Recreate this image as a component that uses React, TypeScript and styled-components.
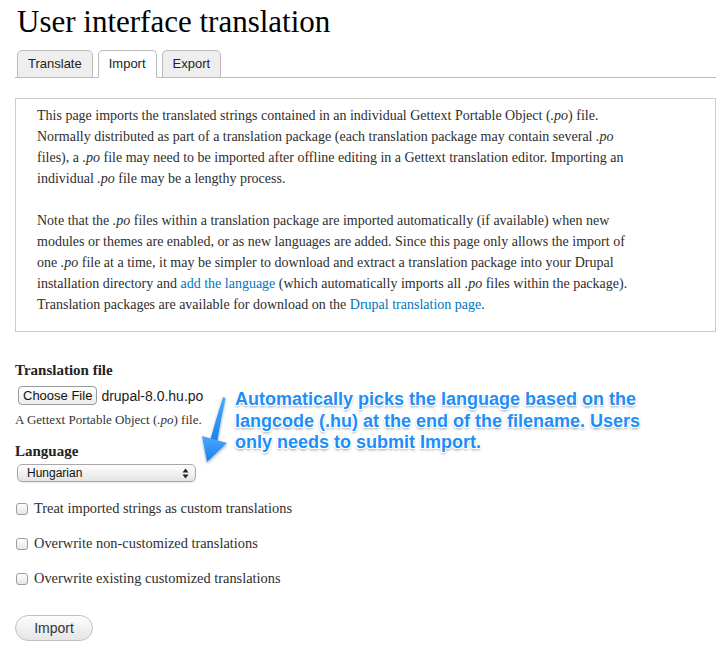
import styled, { createGlobalStyle } from 'styled-components';

const GlobalStyle = createGlobalStyle`
  body {
    margin: 0;
    background: #fff;
    color: #333;
    font-family: "Liberation Serif", serif;
  }
`;

const Page = styled.div`
  width: 701px;
  padding: 0 9px 24px 15px;
`;

const Title = styled.h1`
  margin: 0;
  padding: 3px 0 0 2px;
  font: 400 31px/38px "Liberation Serif", serif;
  color: #000;
`;

const TabList = styled.ul`
  display: flex;
  gap: 5px;
  margin: 9px 0 0;
  padding: 0 0 0 2px;
  list-style: none;
  border-bottom: 1px solid #bbb;
`;

const Tab = styled.li<{ $active?: boolean }>`
  box-sizing: border-box;
  height: 28px;
  margin-bottom: -1px;
  padding: 0 10px 2px;
  display: flex;
  align-items: center;
  border: 1px solid #bbb;
  border-bottom-color: ${(p) => (p.$active ? '#fff' : '#bbb')};
  border-radius: 5px 5px 0 0;
  background: ${(p) => (p.$active ? '#fff' : '#eee')};
  font: 13px "Liberation Sans", sans-serif;
  color: #222;
`;

const Intro = styled.div`
  margin-top: 20px;
  padding: 6px 21px 16px;
  border: 1px solid #ccc;
`;

const Para = styled.p`
  margin: 0 0 21px;
  font-size: 14px;
  line-height: 21px;
  color: #2e2e2e;
  white-space: nowrap;

  &:last-child {
    margin-bottom: 0;
  }

  a {
    color: #0074bd;
    text-decoration: none;
  }
`;

const Form = styled.form`
  position: relative;
  padding-top: 28px;
`;

const FieldLabel = styled.label`
  display: block;
  font: 700 15px/21px "Liberation Serif", serif;
  color: #222;
`;

const Field = styled.div<{ $gap?: number }>`
  margin-bottom: ${(p) => p.$gap ?? 0}px;
`;

const FileRow = styled.div`
  display: flex;
  align-items: center;
  gap: 4px;
  margin: 5px 0 0 3px;
`;

const FileButton = styled.button`
  height: 19px;
  padding: 0 4px;
  border: 1px solid #9a9a9a;
  border-radius: 4px;
  background: linear-gradient(#fff, #ececec);
  font: 13px "Liberation Sans", sans-serif;
  color: #111;
`;

const FileName = styled.span`
  font: 14px "Liberation Sans", sans-serif;
  color: #222;
`;

const Description = styled.div`
  margin-top: 6px;
  font-size: 13px;
  line-height: 18px;
  color: #333;
`;

const SelectBox = styled.div`
  box-sizing: border-box;
  width: 179px;
  height: 18px;
  margin: 2px 0 0 2px;
  padding: 0 6px 0 9px;
  display: flex;
  align-items: center;
  justify-content: space-between;
  border: 1px solid #a8a8a8;
  border-radius: 5px;
  background: linear-gradient(#fefefe, #e4e4e4);
  box-shadow: 0 1px 1px rgba(0, 0, 0, 0.08);
  font: 12px "Liberation Sans", sans-serif;
  color: #111;
`;

const Options = styled.div`
  display: flex;
  flex-direction: column;
  gap: 14px;
  margin-top: 16px;
`;

const CheckRow = styled.label`
  display: flex;
  align-items: center;
  gap: 6px;
  padding-left: 1px;
  font-size: 14.4px;
  line-height: 21px;
  color: #2e2e2e;
`;

const Check = styled.input`
  appearance: none;
  width: 12px;
  height: 12px;
  margin: 0;
  border: 1px solid #9c9c9c;
  border-radius: 3px;
  background: linear-gradient(#fff, #e6e6e6);
  box-shadow: inset 0 1px 0 #fff;
`;

const SubmitButton = styled.button`
  box-sizing: border-box;
  width: 78px;
  height: 26px;
  margin-top: 26px;
  border: 1px solid #c2c2c2;
  border-radius: 13px;
  background: linear-gradient(#fdfdfd, #e5e5e5);
  font: 14px "Liberation Sans", sans-serif;
  color: #333;
`;

/* callout drawn over the form: arrow plus note */
const Arrow = styled.svg`
  position: absolute;
  left: 175px;
  top: 53px;
  overflow: visible;
`;

const Note = styled.div`
  position: absolute;
  left: 220px;
  top: 57px;
  font: 700 18px/21.5px "Liberation Sans", Arial, sans-serif;
  color: #1e8ef8;
  white-space: nowrap;
  text-shadow:
    1px 0 0 #fff, -1px 0 0 #fff, 0 1px 0 #fff, 0 -1px 0 #fff,
    1px 1px 0 #fff, -1px -1px 0 #fff, 1px -1px 0 #fff, -1px 1px 0 #fff,
    0 2px 3px rgba(0, 0, 0, 0.45);
`;

const CalloutArrow = () => (
  <Arrow width="50" height="90" viewBox="0 0 50 90">
    <defs>
      <linearGradient id="arrowFill" x1="0" y1="0" x2="0" y2="1">
        <stop offset="0" stopColor="#4aa8ff" />
        <stop offset="1" stopColor="#1a7ff0" />
      </linearGradient>
      <filter id="arrowShadow" x="-50%" y="-50%" width="200%" height="200%">
        <feDropShadow dx="0" dy="1.5" stdDeviation="1.5" floodColor="#000" floodOpacity="0.35" />
      </filter>
    </defs>
    <g filter="url(#arrowShadow)" fill="url(#arrowFill)">
      <path d="M33 12 L35.5 13 Q31 34 27 58 L20 56 Q26 34 33 12 Z" />
      <path d="M12 51 L37 58 L17 77 Z" />
    </g>
  </Arrow>
);

const SelectArrows = () => (
  <svg width="7" height="11" viewBox="0 0 7 11">
    <path d="M3.5 0.5 L6.5 4.5 L0.5 4.5 Z M3.5 10.5 L6.5 6.5 L0.5 6.5 Z" fill="#222" />
  </svg>
);

const App = () => {
  return (
    <Page>
      <GlobalStyle />
      <Title>User interface translation</Title>
      <TabList>
        <Tab>Translate</Tab>
        <Tab $active>Import</Tab>
        <Tab>Export</Tab>
      </TabList>

      <Intro>
        <Para>
          This page imports the translated strings contained in an individual Gettext Portable Object (<em>.po</em>) file.
          <br />
          Normally distributed as part of a translation package (each translation package may contain several <em>.po</em>
          <br />
          files), a <em>.po</em> file may need to be imported after offline editing in a Gettext translation editor. Importing an
          <br />
          individual <em>.po</em> file may be a lengthy process.
        </Para>
        <Para>
          Note that the <em>.po</em> files within a translation package are imported automatically (if available) when new
          <br />
          modules or themes are enabled, or as new languages are added. Since this page only allows the import of
          <br />
          one <em>.po</em> file at a time, it may be simpler to download and extract a translation package into your Drupal
          <br />
          installation directory and <a href="#">add the language</a> (which automatically imports all <em>.po</em> files within the package).
          <br />
          Translation packages are available for download on the <a href="#">Drupal translation page</a>.
        </Para>
      </Intro>

      <Form>
        <Field $gap={12}>
          <FieldLabel>Translation file</FieldLabel>
          <FileRow>
            <FileButton type="button">Choose File</FileButton>
            <FileName>drupal-8.0.hu.po</FileName>
          </FileRow>
          <Description>
            A Gettext Portable Object (<em>.po</em>) file.
          </Description>
        </Field>

        <Field>
          <FieldLabel>Language</FieldLabel>
          <SelectBox>
            <span>Hungarian</span>
            <SelectArrows />
          </SelectBox>
        </Field>

        <Options>
          <CheckRow>
            <Check type="checkbox" />
            Treat imported strings as custom translations
          </CheckRow>
          <CheckRow>
            <Check type="checkbox" />
            Overwrite non-customized translations
          </CheckRow>
          <CheckRow>
            <Check type="checkbox" />
            Overwrite existing customized translations
          </CheckRow>
        </Options>

        <SubmitButton type="button">Import</SubmitButton>

        <CalloutArrow />
        <Note>
          Automatically picks the language based on the
          <br />
          langcode (.hu) at the end of the filename. Users
          <br />
          only needs to submit Import.
        </Note>
      </Form>
    </Page>
  );
};

export default App;
